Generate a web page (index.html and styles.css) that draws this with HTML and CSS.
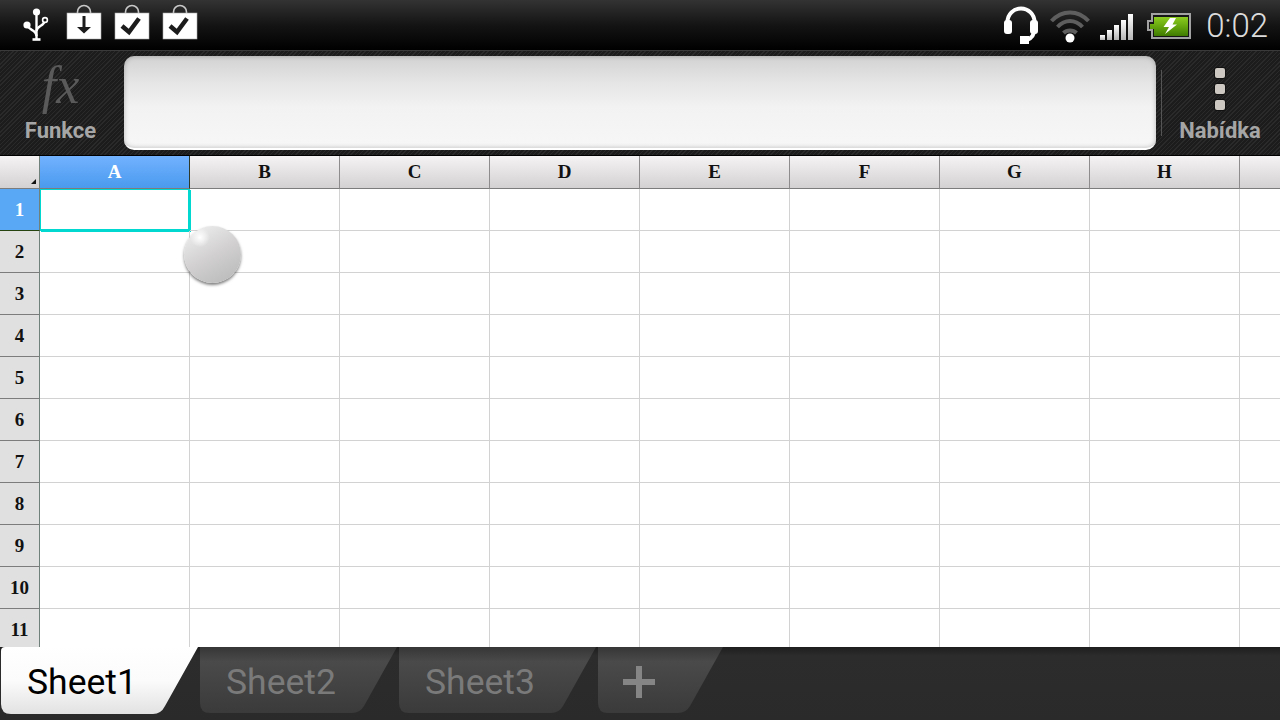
FILE: index.html
```html
<!DOCTYPE html>
<html lang="cs">
<head>
    <meta charset="UTF-8">
    <title>Sheet1</title>
    <link rel="stylesheet" href="styles.css">
</head>
<body>
    <div class="screen">
        <header class="status-bar">
            <div class="status-group">
                <svg class="icon" width="45" height="50" viewBox="15 0 45 50">
                    <g fill="none" stroke="#fff" stroke-width="2.4">
                        <path d="M36.5 12V40"/>
                        <path d="M27 25C29 31 36 29 36.5 36"/>
                        <path d="M45 20C44 27 37 25 36.5 31"/>
                        <path d="M32.5 39.5H40.5" stroke-width="2.6"/>
                    </g>
                    <circle cx="36.5" cy="12" r="3.6" fill="#fff"/>
                    <circle cx="27" cy="25" r="3.6" fill="#fff"/>
                    <circle cx="45" cy="20" r="2.4" fill="#111" stroke="#fff" stroke-width="1.6"/>
                </svg>
                <svg class="icon" width="48" height="50" viewBox="0 0 48 50">
                    <path d="M17.5 14V12A6.5 6.5 0 0 1 30.5 12V14" fill="none" stroke="#c8c8c8" stroke-width="1.6"/>
                    <rect x="7" y="13" width="34" height="26" fill="#fff" stroke="#aaa" stroke-width="0.6"/>
                    <path d="M22.5 16H25.5V27H31L24 33.5L17 27H22.5Z" fill="#1c1c1c"/>
                </svg>
                <svg class="icon" width="48" height="50" viewBox="0 0 48 50">
                    <path d="M17.5 14V12A6.5 6.5 0 0 1 30.5 12V14" fill="none" stroke="#c8c8c8" stroke-width="1.6"/>
                    <rect x="7" y="13" width="34" height="26" fill="#fff" stroke="#aaa" stroke-width="0.6"/>
                    <path d="M14 26L21 32L31 18.500" fill="none" stroke="#1c1c1c" stroke-width="4.500"/>
                </svg>
                <svg class="icon" width="48" height="50" viewBox="0 0 48 50">
                    <path d="M17.5 14V12A6.5 6.5 0 0 1 30.5 12V14" fill="none" stroke="#c8c8c8" stroke-width="1.6"/>
                    <rect x="7" y="13" width="34" height="26" fill="#fff" stroke="#aaa" stroke-width="0.6"/>
                    <path d="M14 26L21 32L31 18.500" fill="none" stroke="#1c1c1c" stroke-width="4.500"/>
                </svg>
            </div>
            <div class="status-group">
                <svg class="icon" width="45" height="50" viewBox="1000 0 45 50">
                    <path d="M1007.500 25V22A13.500 13.500 0 0 1 1034.500 22V28C1034.500 35 1031 39 1026 40.500" fill="none" stroke="#fff" stroke-width="4"/>
                    <rect x="1004" y="20" width="8" height="14" rx="3" fill="#fff"/>
                    <rect x="1030" y="20" width="8" height="14" rx="3" fill="#fff"/>
                    <rect x="1020" y="36" width="9" height="8" fill="#fff"/>
                </svg>
                <svg class="icon" width="50" height="50" viewBox="1045 0 50 50">
                    <g fill="none" stroke="#5e5e5e" stroke-width="4">
                        <path d="M1051.500 21C1062 9.500 1078 9.500 1088.500 21"/>
                        <path d="M1057.500 27C1065 19 1075 19 1082.500 27"/>
                        <path d="M1063.500 33C1067 29.500 1073 29.500 1076.500 33"/>
                    </g>
                    <circle cx="1070" cy="38" r="4.500" fill="#fff"/>
                </svg>
                <svg class="icon" width="47" height="50" viewBox="1095 0 47 50">
                    <defs>
                        <linearGradient id="barFill" x1="0" y1="0" x2="0" y2="1">
                            <stop offset="0" stop-color="#fff"/>
                            <stop offset="1" stop-color="#b4b4b4"/>
                        </linearGradient>
                    </defs>
                    <g fill="url(#barFill)">
                        <rect x="1100" y="35" width="5" height="5"/>
                        <rect x="1107" y="30" width="5" height="10"/>
                        <rect x="1114" y="25" width="5" height="15"/>
                        <rect x="1121" y="20" width="5" height="20"/>
                        <rect x="1128" y="14" width="5" height="26"/>
                    </g>
                </svg>
                <svg class="icon" width="54" height="50" viewBox="1142 0 54 50">
                    <defs>
                        <linearGradient id="batteryFill" x1="0" y1="0" x2="0" y2="1">
                            <stop offset="0" stop-color="#8ccc20"/>
                            <stop offset="0.5" stop-color="#65a60e"/>
                            <stop offset="1" stop-color="#3f7a00"/>
                        </linearGradient>
                    </defs>
                    <path d="M1147 20H1151V13H1191V39H1151V31H1147Z" fill="#a2a2a2"/>
                    <path d="M1149 22H1153V15H1189V37H1153V29H1149Z" fill="#161616"/>
                    <path d="M1150 24H1154V17H1188V36H1154V29H1150Z" fill="url(#batteryFill)"/>
                    <path d="M1170 18H1176L1172.500 24.500H1177L1165 34L1169 27H1163.500Z" fill="#fff"/>
                </svg>
                <span class="clock">0:02</span>
            </div>
        </header>

        <div class="toolbar">
            <div class="tool tool-left">
                <span class="fx">fx</span>
                <span class="tool-label">Funkce</span>
            </div>
            <div class="formula-box"></div>
            <div class="divider"></div>
            <div class="tool tool-right">
                <div class="menu-dots">
                    <span class="dot"></span>
                    <span class="dot"></span>
                    <span class="dot"></span>
                </div>
                <span class="tool-label">Nabídka</span>
            </div>
        </div>

        <main class="sheet">
            <table class="grid">
                <tr class="col-heads">
                    <th class="corner"></th>
                    <th class="selected">A</th><th>B</th><th>C</th><th>D</th><th>E</th><th>F</th><th>G</th><th>H</th><th></th>
                </tr>
                <tr><th class="selected">1</th><td class="active"></td><td></td><td></td><td></td><td></td><td></td><td></td><td></td><td></td></tr>
                <tr><th>2</th><td></td><td></td><td></td><td></td><td></td><td></td><td></td><td></td><td></td></tr>
                <tr><th>3</th><td></td><td></td><td></td><td></td><td></td><td></td><td></td><td></td><td></td></tr>
                <tr><th>4</th><td></td><td></td><td></td><td></td><td></td><td></td><td></td><td></td><td></td></tr>
                <tr><th>5</th><td></td><td></td><td></td><td></td><td></td><td></td><td></td><td></td><td></td></tr>
                <tr><th>6</th><td></td><td></td><td></td><td></td><td></td><td></td><td></td><td></td><td></td></tr>
                <tr><th>7</th><td></td><td></td><td></td><td></td><td></td><td></td><td></td><td></td><td></td></tr>
                <tr><th>8</th><td></td><td></td><td></td><td></td><td></td><td></td><td></td><td></td><td></td></tr>
                <tr><th>9</th><td></td><td></td><td></td><td></td><td></td><td></td><td></td><td></td><td></td></tr>
                <tr><th>10</th><td></td><td></td><td></td><td></td><td></td><td></td><td></td><td></td><td></td></tr>
                <tr><th>11</th><td></td><td></td><td></td><td></td><td></td><td></td><td></td><td></td><td></td></tr>
            </table>
            <div class="ball"></div>
        </main>

        <nav class="tabs">
            <div class="tab tab-active">Sheet1</div>
            <div class="tab">Sheet2</div>
            <div class="tab">Sheet3</div>
            <div class="tab tab-add">
                <svg width="34" height="34" viewBox="0 0 34 34">
                    <path d="M14 1H20V14H33V20H20V33H14V20H1V14H14Z" fill="#858585"/>
                </svg>
            </div>
        </nav>
    </div>
</body>
</html>
```

FILE: styles.css
```css
* {
    box-sizing: border-box;
}
html, body {
    margin: 0;
    padding: 0;
    background-color: #000;
}
.screen {
    width: 1280px;
    height: 720px;
    display: flex;
    flex-direction: column;
    overflow: hidden;
    font-family: Roboto, "Liberation Sans", sans-serif;
}

/* status bar */
.status-bar {
    height: 50px;
    flex: none;
    display: flex;
    justify-content: space-between;
    padding: 0 12px 0 15px;
    background: linear-gradient(#333 0, #141414 50%, #000 100%);
}
.status-group {
    display: flex;
    align-items: center;
}
.icon {
    display: block;
    flex: none;
}
.clock {
    margin-left: 10px;
    font-size: 33px;
    font-weight: 300;
    color: #dcdcdc;
}

/* toolbar */
.toolbar {
    height: 106px;
    flex: none;
    display: flex;
    padding: 5px 0;
    border-top: 1px solid #3a3a3a;
    border-bottom: 1px solid #000;
    background-color: #222;
    background-image: repeating-linear-gradient(135deg, #2a2a2a 0, #2a2a2a 1px, #1c1c1c 1px, #1c1c1c 3px);
}
.tool {
    display: flex;
    flex-direction: column;
    align-items: center;
    padding-bottom: 5px;
}
.tool-left {
    width: 121px;
    margin-right: 3px;
}
.tool-right {
    width: 118px;
    padding-right: 2px;
}
.divider {
    width: 1px;
    height: 66px;
    margin: 14px 0 0 5px;
    background-color: #555;
}
.fx {
    height: 50px;
    margin-top: 5px;
    font-family: "Liberation Serif", serif;
    font-style: italic;
    font-size: 52px;
    line-height: 50px;
    color: #5a5a5a;
}
.tool-label {
    margin-top: auto;
    font-size: 22px;
    font-weight: 700;
    line-height: 28px;
    color: #a6a6a6;
}
.formula-box {
    flex: 1;
    border-radius: 10px;
    border-bottom: 2px solid #fff;
    background: linear-gradient(#d2d2d2 0, #e6e6e6 30%, #f2f2f2 55%, #f7f7f7 100%);
    box-shadow: inset 0 0 5px rgba(0, 0, 0, 0.25);
}
.menu-dots {
    display: flex;
    flex-direction: column;
    gap: 6px;
    margin-top: 12px;
}
.dot {
    width: 10px;
    height: 10px;
    border-radius: 2px;
    background-color: #cdc9c2;
    box-shadow: 0 0 0 1px #111;
}

/* sheet */
.sheet {
    flex: 1;
    position: relative;
    overflow: hidden;
    background-color: #fff;
}
.grid {
    table-layout: fixed;
    width: 1390px;
    border-collapse: separate;
    border-spacing: 0;
}
.grid th,
.grid td {
    width: 150px;
    height: 42px;
    padding: 0;
    border-right: 1px solid #d2d2d2;
    border-bottom: 1px solid #d2d2d2;
}
.grid th {
    font-family: "Liberation Serif", serif;
    font-size: 19px;
    font-weight: 700;
    color: #111;
}
.grid tr th:first-child {
    width: 40px;
    background-color: #e0e0e0;
    border-right-color: #70807a;
    border-bottom-color: #7c7c7c;
}
.grid tr th.selected:first-child {
    background-color: #58a8f6;
    color: #fff;
    border-bottom-color: #26440f;
}
.col-heads th {
    height: 33px;
    background: linear-gradient(#f5f3f3, #d3d1d1);
    border-right-color: #8e8c8c;
    border-bottom-color: #7c7c7c;
}
.col-heads th.selected {
    background: linear-gradient(#72b2ff, #4a9aee);
    color: #fff;
    border-right-color: #2f3a28;
}
.corner {
    position: relative;
}
.corner::after {
    content: '';
    position: absolute;
    right: 3px;
    bottom: 4px;
    border-left: 5px solid transparent;
    border-bottom: 5px solid #111;
}
.grid td.active {
    border-right-color: #00d8d0;
    border-bottom-color: #00d8d0;
    box-shadow: inset 1px 1px 0 #00d8d0, inset -1px -1px 0 #00d8d0, 1px 1px 0 #00d8d0;
}
.ball {
    position: absolute;
    left: 184px;
    top: 70px;
    width: 57px;
    height: 57px;
    border-radius: 50%;
    background:
        radial-gradient(circle at 50% 50%, transparent 0, transparent 84%, rgba(110, 110, 110, 0.55) 94%, #7a7a7a 100%),
        radial-gradient(circle at 28% 20%, #fff 0, rgba(255, 255, 255, 0) 16%),
        linear-gradient(150deg, #ececec 10%, #d2d0d0 50%, #bcbcbc 90%);
    box-shadow: 0 2px 3px rgba(0, 0, 0, 0.5);
}

/* sheet tabs */
.tabs {
    height: 73px;
    flex: none;
    display: flex;
    gap: 2px;
    padding-left: 1px;
    background: linear-gradient(#1e1e1e 0, #2c2c2c 12%, #2a2a2a 100%);
}
.tab {
    width: 197px;
    height: 67px;
    padding-left: 26px;
    font-size: 35.500px;
    line-height: 71px;
    color: #7a7a7a;
    background: linear-gradient(#363636 0, #4a4a4a 22%, #3a3a3a 100%);
    clip-path: path("M0 0H197L164 59Q160 66 152 66H10Q0 66 0 56Z");
}
.tab-active {
    color: #000;
    background: linear-gradient(#fff 0, #fbfbfb 50%, #e2e2e2 100%);
    clip-path: path("M4 0H197L164 59Q160 67 152 67H10Q0 67 0 57V4Q0 0 4 0Z");
}
.tab-add {
    width: 125px;
    padding: 18px 0 0 24px;
    clip-path: path("M0 0H125L92 59Q88 66 80 66H10Q0 66 0 56Z");
}
.tab-add svg {
    display: block;
}
```
